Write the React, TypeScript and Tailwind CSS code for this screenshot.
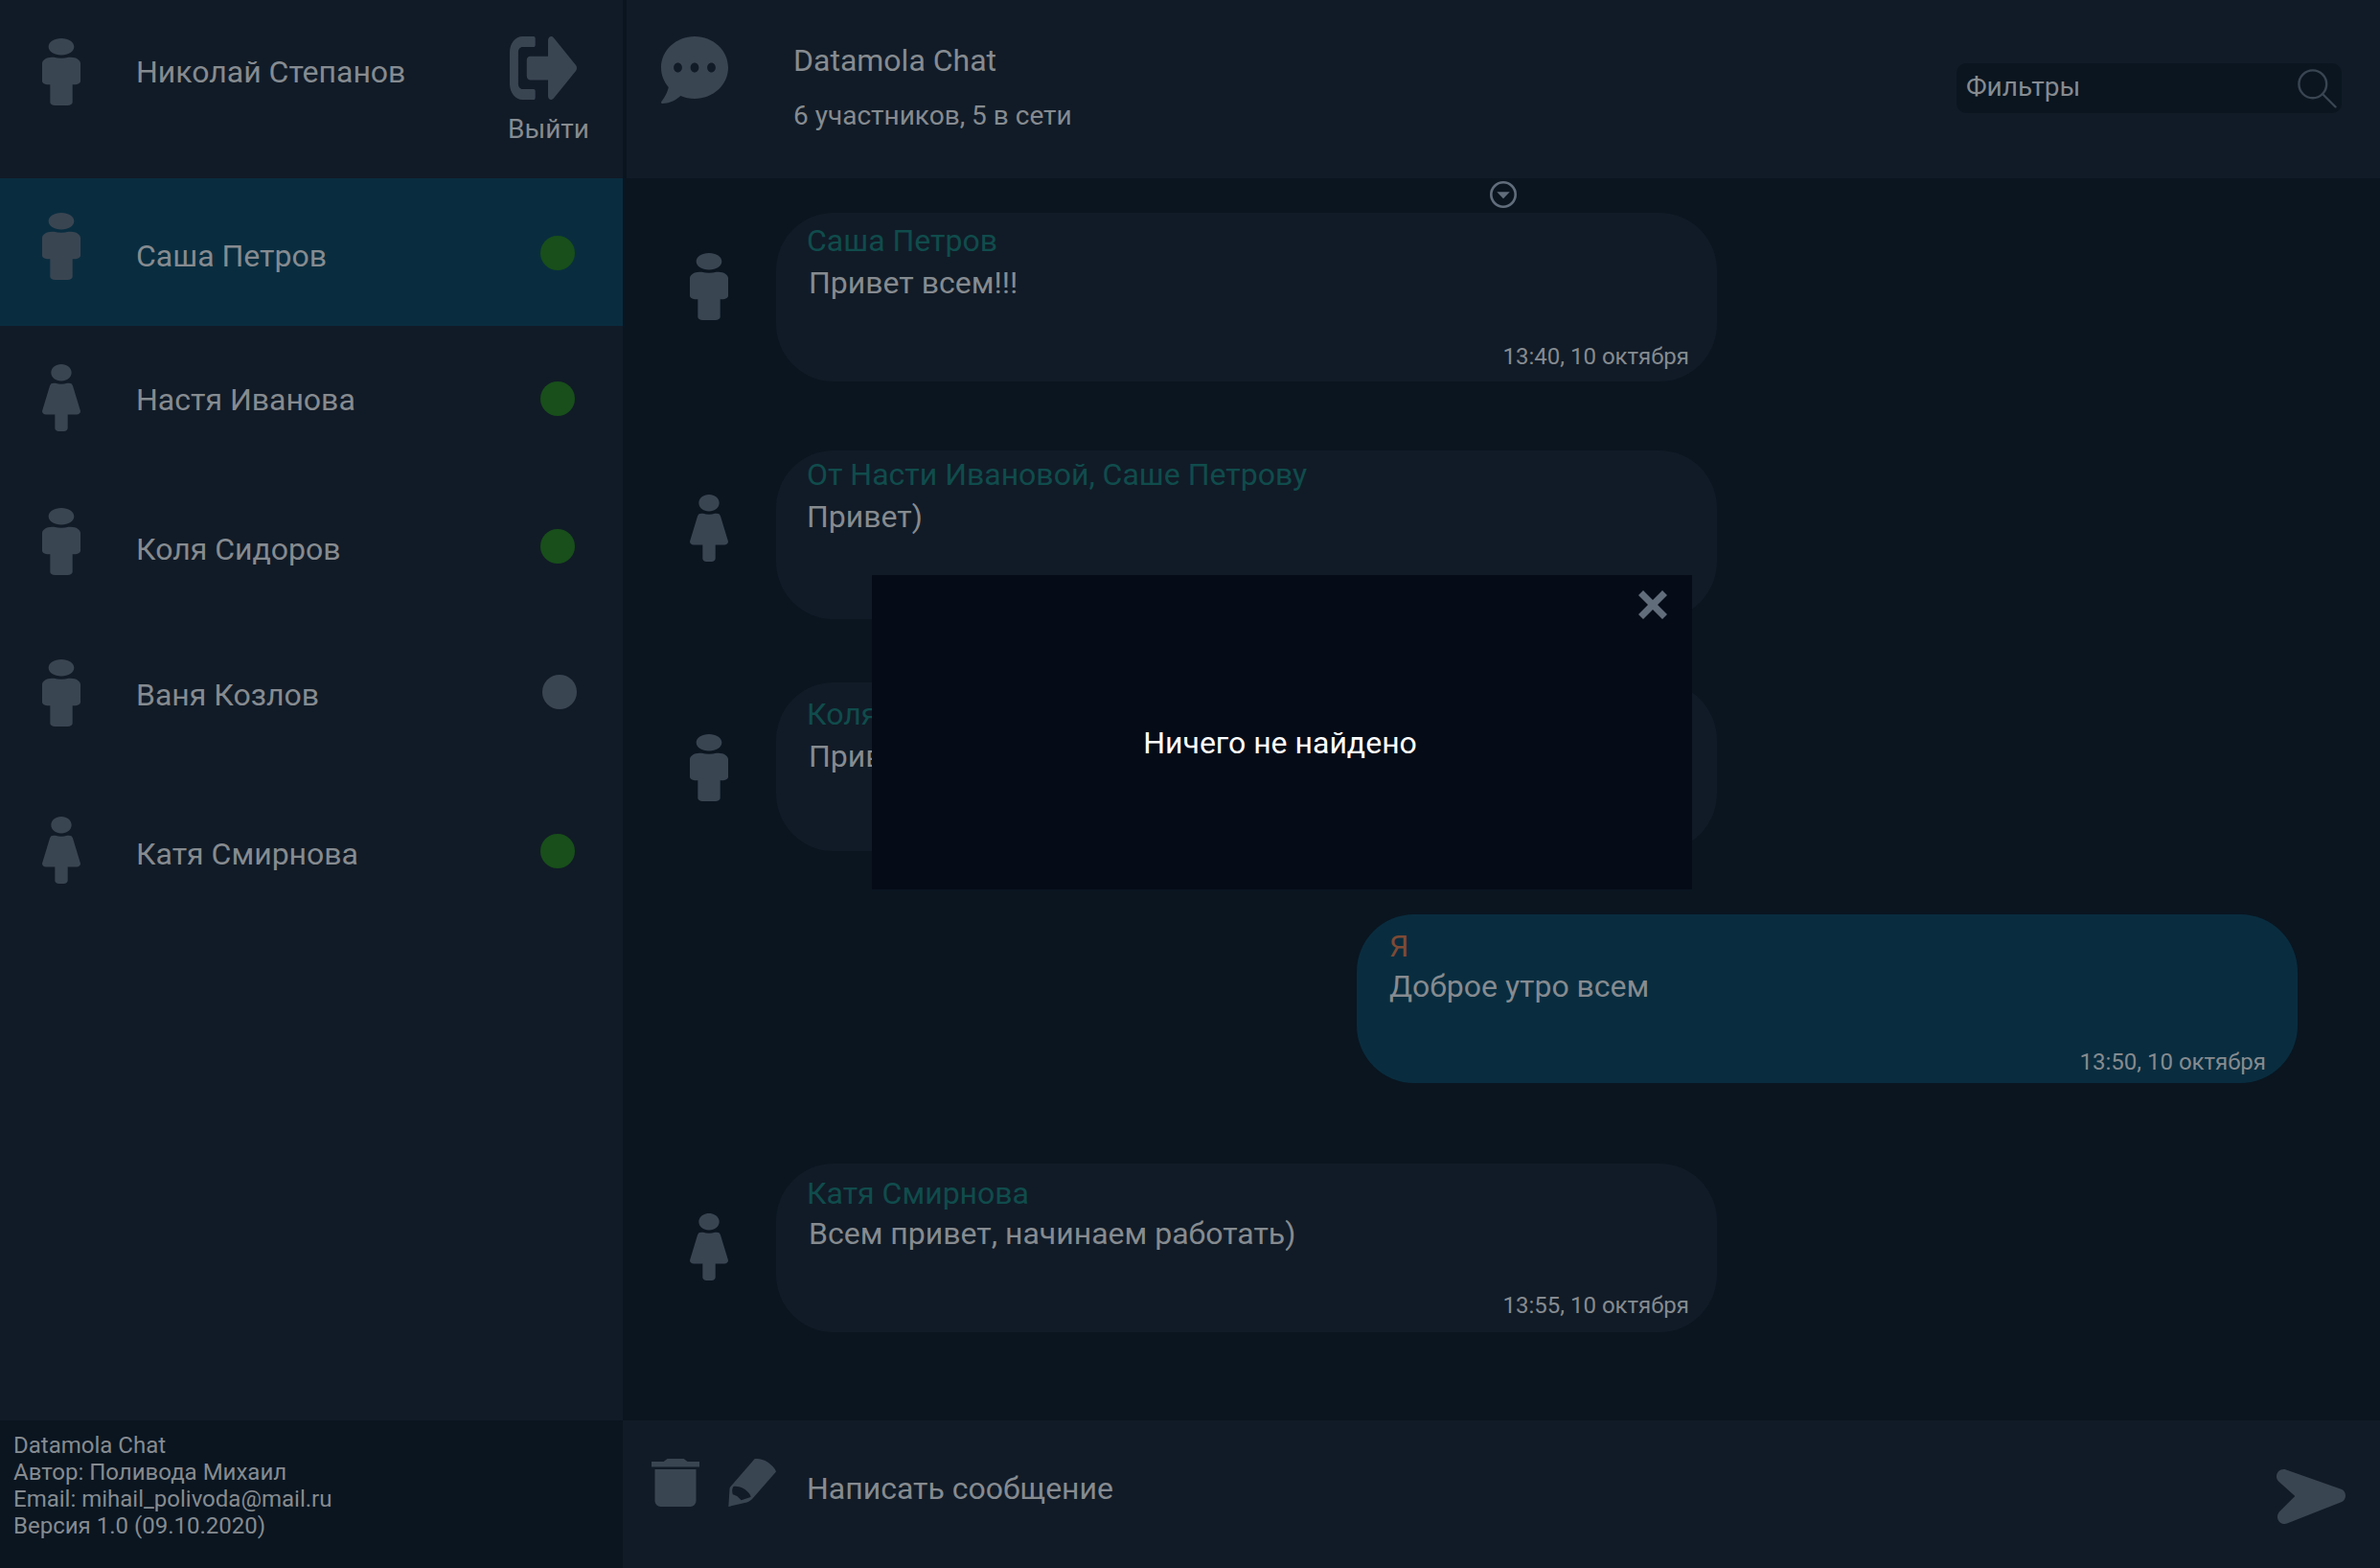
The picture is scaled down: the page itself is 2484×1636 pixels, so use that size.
import React from "react";

type Sex = "male" | "female";

const MALE =
  "M96 0c35.346 0 64 28.654 64 64s-28.654 64-64 64-64-28.654-64-64S60.654 0 96 0m48 144h-11.36c-22.711 10.443-49.59 10.894-73.28 0H48c-26.51 0-48 21.49-48 48v136c0 13.255 10.745 24 24 24h16v136c0 13.255 10.745 24 24 24h64c13.255 0 24-10.745 24-24V352h16c13.255 0 24-10.745 24-24V192c0-26.51-21.49-48-48-48z";
const FEMALE =
  "M128 0c35.346 0 64 28.654 64 64s-28.654 64-64 64c-35.346 0-64-28.654-64-64S92.654 0 128 0m119.283 354.179l-48-192A24 24 0 0 0 176 144h-11.36c-22.711 10.443-49.59 10.894-73.28 0H80a24 24 0 0 0-23.283 18.179l-48 192C4.935 369.305 16.383 384 32 384h56v104c0 13.255 10.745 24 24 24h32c13.255 0 24-10.745 24-24V384h56c15.591 0 27.071-14.671 23.283-29.821z";

function Person({ sex, className = "" }: { sex: Sex; className?: string }) {
  return (
    <svg
      viewBox={sex === "male" ? "0 0 192 512" : "8 0 240 512"}
      preserveAspectRatio="none"
      className={`h-[70px] w-10 shrink-0 fill-[#3a4552] ${className}`}
    >
      <path d={sex === "male" ? MALE : FEMALE} />
    </svg>
  );
}

const contacts: {
  name: string;
  sex: Sex;
  row: string;
  icon: string;
  label: string;
  dot: string;
}[] = [
  { name: "Саша Петров", sex: "male", row: "h-[154px] bg-[#092d3f]", icon: "mt-9", label: "mt-[61px]", dot: "mt-[60px] mr-[50px] bg-[#184f1a]" },
  { name: "Настя Иванова", sex: "female", row: "h-[150px]", icon: "mt-10", label: "mt-[57px]", dot: "mt-[58px] mr-[50px] bg-[#184f1a]" },
  { name: "Коля Сидоров", sex: "male", row: "h-[158px]", icon: "mt-10", label: "mt-[63px]", dot: "mt-[62px] mr-[50px] bg-[#184f1a]" },
  { name: "Ваня Козлов", sex: "male", row: "h-[164px]", icon: "mt-10", label: "mt-[57px]", dot: "mt-[56px] mr-[48px] bg-[#3a4552]" },
  { name: "Катя Смирнова", sex: "female", row: "h-[150px]", icon: "mt-10", label: "mt-[59px]", dot: "mt-[58px] mr-[50px] bg-[#184f1a]" },
];

function Bubble({
  author,
  text,
  time,
  own = false,
  padding,
  textGap,
  textIndent = "",
}: {
  author: string;
  text: string;
  time: string;
  own?: boolean;
  padding: string;
  textGap: string;
  textIndent?: string;
}) {
  return (
    <div
      className={`flex h-[176px] w-[982px] shrink-0 flex-col rounded-[60px] ${
        own ? "bg-[#092d3f] pr-[33px] pl-[34px]" : "ml-[50px] bg-[#111b27] pr-[29px] pl-8"
      } ${padding}`}
    >
      <p className={`leading-10 ${own ? "text-[#7e4a35]" : "text-[#104c4c]"}`}>{author}</p>
      <p className={`leading-10 ${textGap} ${textIndent}`}>{text}</p>
      <p className="mt-auto text-right text-2xl leading-7">{time}</p>
    </div>
  );
}

export default function App() {
  return (
    <div className="relative flex h-[1636px] w-[2484px] overflow-hidden bg-[#0a1520] font-[Roboto,sans-serif] text-[32px] text-[#868b90]">
      <aside className="flex w-[650px] shrink-0 flex-col bg-[#111b27]">
        <div className="flex h-[186px] items-start pl-11">
          <Person sex="male" className="mt-10" />
          <p className="mt-[55px] ml-[58px] leading-10">Николай Степанов</p>
          <div className="mt-[38px] mr-[35px] ml-auto flex flex-col">
            <svg viewBox="0 64 504 384" preserveAspectRatio="none" className="ml-0.5 h-[66px] w-[70px] fill-[#3a4552]">
              <path d="M497 273L329 441c-15 15-41 4.500-41-17v-96H152c-13.300 0-24-10.700-24-24v-96c0-13.300 10.700-24 24-24h136V88c0-21.400 25.900-32 41-17l168 168c9.300 9.400 9.300 24.600 0 34zM192 436v-40c0-6.600-5.400-12-12-12H96c-17.700 0-32-14.300-32-32V160c0-17.700 14.300-32 32-32h84c6.600 0 12-5.400 12-12V76c0-6.600-5.400-12-12-12H96c-53 0-96 43-96 96v192c0 53 43 96 96 96h84c6.600 0 12-5.400 12-12z" />
            </svg>
            <span className="mt-[15px] text-[28px] leading-8">Выйти</span>
          </div>
        </div>
        <ul className="flex flex-col">
          {contacts.map((c) => (
            <li key={c.name} className={`flex items-start pl-11 ${c.row}`}>
              <Person sex={c.sex} className={c.icon} />
              <span className={`ml-[58px] leading-10 ${c.label}`}>{c.name}</span>
              <span className={`ml-auto size-9 rounded-full ${c.dot}`} />
            </li>
          ))}
        </ul>
        <footer className="mt-auto h-[154px] bg-[#0a1520] pt-3 pl-[14px] text-2xl leading-7">
          <p>Datamola Chat</p>
          <p>Автор: Поливода Михаил</p>
          <p>Email: mihail_polivoda@mail.ru</p>
          <p>Версия 1.0 (09.10.2020)</p>
        </footer>
      </aside>

      <main className="flex flex-1 flex-col">
        <header className="ml-1 flex h-[186px] items-start bg-[#111b27] pl-9">
          <svg viewBox="0 32 512 448" preserveAspectRatio="none" className="mt-[38px] size-[70px] fill-[#3a4552]">
            <path d="M256 32C114.6 32 0 125.100 0 240c0 49.600 21.400 95 57 130.700C44.500 421.100 2.700 466 2.200 466.500c-2.200 2.300-2.800 5.700-1.500 8.700S4.800 480 8 480c66.300 0 116-31.800 140.600-51.400 32.700 12.300 69 19.400 107.400 19.400 141.400 0 256-93.100 256-208S397.400 32 256 32zM128 272c-17.700 0-32-14.300-32-32s14.300-32 32-32 32 14.300 32 32-14.300 32-32 32zm128 0c-17.700 0-32-14.300-32-32s14.300-32 32-32 32 14.300 32 32-14.300 32-32 32zm128 0c-17.700 0-32-14.300-32-32s14.300-32 32-32 32 14.300 32 32-14.300 32-32 32z" />
          </svg>
          <div className="mt-[43px] ml-[68px]">
            <h1 className="leading-10">Datamola Chat</h1>
            <p className="mt-[22px] text-[28px] leading-8">6 участников, 5 в сети</p>
          </div>
          <div className="mt-[66px] mr-10 ml-auto flex h-[52px] w-[402px] items-start justify-between rounded-[10px] bg-[#0a1520] pr-[5px] pl-[10px]">
            <span className="mt-[9px] text-[28px] leading-8">Фильтры</span>
            <svg viewBox="0 0 41 41" className="mt-1.5 size-[41px] fill-none stroke-[#3a4552] stroke-[2.4]">
              <circle cx="15.800" cy="15.800" r="14.400" />
              <path d="M26 26L39.500 39.500" strokeLinecap="round" />
            </svg>
          </div>
        </header>

        <section className="flex flex-1 flex-col">
          <div className="flex h-9 items-start">
            <svg viewBox="0 0 28 28" className="mt-[3px] ml-[905px] size-7 fill-none stroke-[#626d7b] stroke-[2.600]">
              <circle cx="14" cy="14" r="12.700" />
              <path d="M7.300 11.300h13.400L14 18.300z" className="fill-[#626d7b] stroke-none" />
            </svg>
          </div>
          <div className="flex items-start pl-[70px]">
            <Person sex="male" className="mt-[42px]" />
            <Bubble author="Саша Петров" text="Привет всем!!!" time="13:40, 10 октября" padding="pt-[9px] pb-3" textGap="mt-1" textIndent="ml-0.5" />
          </div>
          <div className="mt-[72px] flex items-start pl-[70px]">
            <Person sex="female" className="mt-[46px]" />
            <Bubble author="От Насти Ивановой, Саше Петрову" text="Привет)" time="13:45, 10 октября" padding="pt-[5px] pb-3" textGap="mt-1" />
          </div>
          <div className="mt-[66px] flex items-start pl-[70px]">
            <Person sex="male" className="mt-[54px]" />
            <Bubble author="Коля Сидоров" text="Привет" time="13:48, 10 октября" padding="pt-[13px] pb-3" textGap="mt-1" textIndent="ml-0.5" />
          </div>
          <div className="mt-[66px] mr-[86px] flex justify-end">
            <Bubble own author="Я" text="Доброе утро всем" time="13:50, 10 октября" padding="pt-[13px] pb-2" textGap="mt-0.5" />
          </div>
          <div className="mt-[84px] flex items-start pl-[70px]">
            <Person sex="female" className="mt-[52px]" />
            <Bubble author="Катя Смирнова" text="Всем привет, начинаем работать)" time="13:55, 10 октября" padding="pt-[11px] pb-[14px]" textGap="mt-0.5" textIndent="ml-0.5" />
          </div>
        </section>

        <div className="flex h-[154px] items-start bg-[#111b27] pl-[30px]">
          <svg viewBox="0 0 50 50" className="mt-10 size-[50px] fill-[#3a4552]">
            <path d="M0 3h12.700L16.500 0H33.700L37.500 3H50V8.500H0zM3.500 11h43V44a6 6 0 0 1-6 6h-31a6 6 0 0 1-6-6z" />
          </svg>
          <svg viewBox="0 0 50 50" className="mt-10 ml-[30px] size-[50px] fill-[#3a4552]">
            <path
              fillRule="evenodd"
              d="M27.500 0.300C31 -0.400 37 0.300 42.500 4.500C47.500 8.300 49.500 11.500 50 13.500L25.500 41.500C24 43.200 22 44.500 19.500 45.500L0.300 50L1.500 31.500C1.600 30.500 2 29.500 3 28.500zM5.500 29C4 31 3.800 34 4.800 37.300C7 38 9 38.800 10.300 40L13.700 43.300L23.500 40C24 38.500 21 34.500 17.500 32C13.500 29.300 8.500 28.300 5.500 29z"
            />
          </svg>
          <p className="mt-[51px] ml-8 leading-10">Написать сообщение</p>
          <svg viewBox="0 0 72 57" className="mt-[51px] mr-9 ml-auto h-[57px] w-[72px] fill-[#3a4552]">
            <path d="M10 0.500L67.500 20.800C73.500 23 73.500 32 67.500 34.300L11 56.500C5.500 58.500 1 54.500 1 49.500C1 47.300 1.800 45.500 3.500 43.800L19.300 28L2.300 12.800C0.700 11.300 0 9.500 0 7.500C0 2.300 5 -1.200 10 0.500z" />
          </svg>
        </div>
      </main>

      <div className="absolute top-[600px] left-[910px] flex h-[328px] w-[856px] flex-col bg-[#050c18]">
        <svg viewBox="0 0 30 30" className="mt-4 mr-[26px] size-[30px] self-end fill-[#626d7b]">
          <path d="M5 0L15 10 25 0 30 5 20 15 30 25 25 30 15 20 5 30 0 25 10 15 0 5z" />
        </svg>
        <p className="mt-[109px] pr-1 text-center leading-10 text-white">Ничего не найдено</p>
      </div>
    </div>
  );
}
